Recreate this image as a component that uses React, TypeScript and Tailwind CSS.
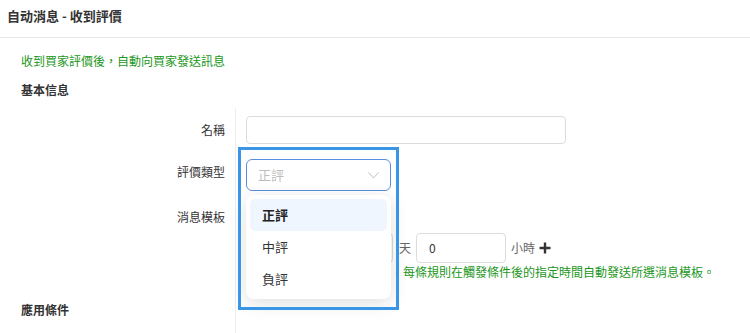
import { useState } from "react";

const options = ["正評", "中評", "負評"];

function Chevron() {
  return (
    <svg width="11" height="7" viewBox="0 0 11 7" fill="none">
      <path d="M0.5 0.5L5.5 6L10.5 0.5" stroke="#bdbdbd" strokeWidth="1" />
    </svg>
  );
}

function PlusIcon() {
  return (
    <svg width="12" height="12" viewBox="0 0 12 12">
      <path d="M6 0.5V11.5M0.5 6H11.5" stroke="#333" strokeWidth="2.4" />
    </svg>
  );
}

export default function App() {
  const [value] = useState("正評");

  return (
    <div className="relative w-[750px] h-[333px] overflow-hidden bg-white text-[#333] font-['Noto_Sans_CJK_TC','Noto_Sans',sans-serif]">
      <div className="h-[38px] border-b border-[#e6e6e6] px-[7px] flex items-center">
        <span className="text-[13px] font-bold leading-4 -mt-[5px]">自动消息 - 收到評價</span>
      </div>

      <div className="pl-[21px] pt-[15px] text-[12px] leading-4 text-[#1a961a]">收到買家評價後，自動向買家發送訊息</div>
      <div className="pl-[21px] mt-[13px] text-[12px] leading-4 font-bold">基本信息</div>

      <div className="mt-[10px] text-[12px] leading-4">
        {/* 名稱 */}
        <div className="flex">
          <div className="w-[236px] border-r border-[#ededed] text-right pr-[10px] pt-[14px]">名稱</div>
          <div className="pl-[10px] pt-[8px] pb-[8px]">
            <div className="w-[320px] h-[28px] rounded-[4px] border border-[#dcdcdc]" />
          </div>
        </div>

        {/* 評價類型 */}
        <div className="flex">
          <div className="w-[236px] border-r border-[#ededed] text-right pr-[10px] pt-[12px]">評價類型</div>
          <div className="pl-[10px] pt-[7px] pb-[7px]">
            <div className="relative">
              <div className="w-[145px] h-[32px] rounded-[6px] border border-[#5b8ee0] flex items-center justify-between pl-[11px] pr-[11px]">
                <span className="text-[13px] text-[#bdbdbd]">{value}</span>
                <Chevron />
              </div>
              <div className="absolute left-0 top-full mt-[4px] w-[145px] rounded-[8px] bg-white p-[4px] shadow-[0_4px_18px_rgba(0,0,0,0.13)] z-10">
                {options.map((o) => (
                  <div
                    key={o}
                    className={
                      o === value
                        ? "h-[32px] flex items-center pl-[12px] rounded-[5px] bg-[#eff6ff] text-[13px] font-bold text-[#222]"
                        : "h-[32px] flex items-center pl-[12px] text-[13px] text-[#333]"
                    }
                  >
                    {o}
                  </div>
                ))}
              </div>
              <div className="absolute -left-[8px] -top-[12px] w-[161px] h-[163px] border-[3px] border-[#3a95e6] z-20" />
            </div>
          </div>
        </div>

        {/* 消息模板 */}
        <div className="flex">
          <div className="w-[236px] border-r border-[#ededed] text-right pr-[10px] pt-[11px]">消息模板</div>
          <div className="pl-[10px] pt-[3px] pb-[2px]">
            <div className="w-[145px] h-[30px] rounded-[4px] border border-[#dcdcdc]" />
          </div>
        </div>

        {/* 延遲時間 */}
        <div className="flex">
          <div className="w-[236px] border-r border-[#ededed]" />
          <div className="pl-[10px] flex items-center">
            <div className="w-[147px] h-[30px] rounded-[4px] border border-[#dcdcdc]" />
            <span className="ml-[6px] text-[#666]">天</span>
            <div className="ml-[5px] w-[90px] h-[30px] rounded-[4px] border border-[#dcdcdc] flex items-center pl-[12px]">0</div>
            <span className="ml-[5px] text-[#666]">小時</span>
            <span className="ml-[4px] flex"><PlusIcon /></span>
          </div>
        </div>

        <div className="flex">
          <div className="w-[236px] border-r border-[#ededed]" />
          <div className="pl-[23px] pt-[1px] pb-[1px] text-[#1a961a] whitespace-nowrap">
            觸發後延遲指定時間發送，每條規則在觸發條件後的指定時間自動發送所選消息模板。
          </div>
        </div>

        {/* 應用條件 */}
        <div className="flex">
          <div className="w-[236px] border-r border-[#ededed] pl-[21px] pt-[21px] pb-[20px] font-bold">應用條件</div>
          <div />
        </div>
      </div>
    </div>
  );
}
